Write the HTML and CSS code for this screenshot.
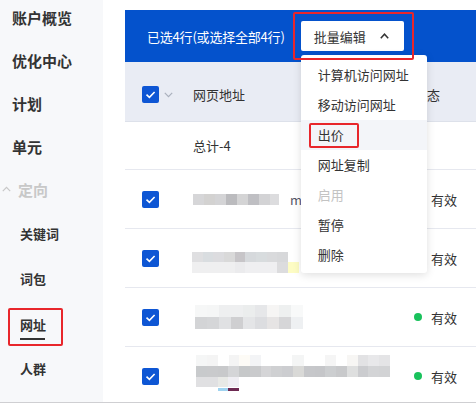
FILE: index.html
```html
<!DOCTYPE html>
<html lang="zh-CN">
<head>
<meta charset="utf-8">
<title>网址</title>
<link rel="stylesheet" href="styles.css">
</head>
<body>
<div class="page">
  <aside class="sidebar">
    <ul class="nav">
      <li class="nav-item">账户概览</li>
      <li class="nav-item">优化中心</li>
      <li class="nav-item">计划</li>
      <li class="nav-item">单元</li>
      <li class="nav-item nav-group"><svg class="group-caret" width="9" height="6" viewBox="0 0 9 6"><polyline points="0.8,5.2 4.5,1.3 8.2,5.2" fill="none" stroke="#c8c8c8" stroke-width="1.2"/></svg>定向</li>
      <li class="nav-sub">关键词</li>
      <li class="nav-sub">词包</li>
      <li class="nav-sub nav-active"><span class="nav-label">网址</span><span class="mark nav-mark"></span></li>
      <li class="nav-sub">人群</li>
    </ul>
  </aside>
  <main class="main">
    <div class="toolbar">
      <span class="sel-text">已选4行(或选择全部4行)</span>
      <div class="batch">
        <button class="batch-btn"><span>批量编辑</span><svg width="9" height="6" viewBox="0 0 9 6"><polyline points="0.8,5.2 4.5,1.2 8.2,5.2" fill="none" stroke="#333" stroke-width="1.5"/></svg></button>
        <span class="mark batch-mark"></span>
        <ul class="menu">
          <li>计算机访问网址</li>
          <li>移动访问网址</li>
          <li class="menu-hover">出价<span class="mark price-mark"></span></li>
          <li>网址复制</li>
          <li class="menu-disabled">启用</li>
          <li>暂停</li>
          <li>删除</li>
        </ul>
      </div>
    </div>
    <div class="table">
      <div class="row row-head">
        <div class="cell-check"><span class="cb"><svg width="17" height="17" viewBox="0 0 17 17"><polyline points="4.5,8.7 7.4,11.4 12.6,6" fill="none" stroke="#fff" stroke-width="1.6"/></svg></span><svg class="head-caret" width="9" height="6" viewBox="0 0 9 6"><polyline points="0.8,0.8 4.5,4.7 8.2,0.8" fill="none" stroke="#aab0bd" stroke-width="1.2"/></svg></div>
        <div>网页地址</div>
        <div>状态</div>
      </div>
      <div class="row row-total">
        <div></div>
        <div>总计-4</div>
        <div></div>
      </div>
      <div class="row row-data">
        <div class="cell-check"><span class="cb"><svg width="17" height="17" viewBox="0 0 17 17"><polyline points="4.5,8.7 7.4,11.4 12.6,6" fill="none" stroke="#fff" stroke-width="1.6"/></svg></span></div>
        <div class="url"><span class="mz mz1"></span><span class="frag">m</span></div>
        <div class="status"><span class="dot"></span>有效</div>
      </div>
      <div class="row row-data">
        <div class="cell-check"><span class="cb"><svg width="17" height="17" viewBox="0 0 17 17"><polyline points="4.5,8.7 7.4,11.4 12.6,6" fill="none" stroke="#fff" stroke-width="1.6"/></svg></span></div>
        <div class="url"><span class="mz mz2"></span></div>
        <div class="status"><span class="dot"></span>有效</div>
      </div>
      <div class="row row-data">
        <div class="cell-check"><span class="cb"><svg width="17" height="17" viewBox="0 0 17 17"><polyline points="4.5,8.7 7.4,11.4 12.6,6" fill="none" stroke="#fff" stroke-width="1.6"/></svg></span></div>
        <div class="url"><span class="mz mz3"></span></div>
        <div class="status"><span class="dot"></span>有效</div>
      </div>
      <div class="row row-data">
        <div class="cell-check"><span class="cb"><svg width="17" height="17" viewBox="0 0 17 17"><polyline points="4.5,8.7 7.4,11.4 12.6,6" fill="none" stroke="#fff" stroke-width="1.6"/></svg></span></div>
        <div class="url"><span class="mz mz4"></span></div>
        <div class="status"><span class="dot"></span>有效</div>
      </div>
    </div>
  </main>
</div>
</body>
</html>
```
FILE: styles.css
```css
* { box-sizing: border-box; }
html, body { margin: 0; padding: 0; }
body {
  width: 476px;
  height: 404px;
  overflow: hidden;
  background: #fff;
  font-family: "Noto Sans CJK SC", "Noto Sans", sans-serif;
  color: #333;
}
.page {
  display: flex;
  height: 403px;
  overflow: hidden;
  border-bottom: 1px solid #cfcfd2;
}
.sidebar {
  width: 103px;
  flex: none;
  background: #f7f8fa;
}
.nav {
  list-style: none;
  margin: -4px 0 0;
  padding: 0;
}
.nav-item {
  height: 43px;
  line-height: 43px;
  padding-left: 12px;
  font-size: 15px;
  font-weight: 700;
  white-space: nowrap;
}
.nav-group {
  padding-left: 2px;
  color: #c8c8c8;
  display: flex;
  align-items: center;
}
.group-caret { margin-right: 7px; margin-top: -2px; }
.nav-sub {
  position: relative;
  height: 45px;
  line-height: 45px;
  padding-left: 20px;
  font-size: 13px;
  font-weight: 700;
}
.nav-label {
  position: relative;
  display: inline-block;
  line-height: 20px;
  vertical-align: middle;
}
.nav-label::after {
  content: "";
  position: absolute;
  left: 0;
  top: 23px;
  width: 25px;
  height: 2px;
  background: #333;
}
.mark {
  position: absolute;
  border: 2px solid #e8262b;
  border-radius: 2px;
  z-index: 20;
  pointer-events: none;
}
.nav-mark { left: 8px; top: 7px; width: 55px; height: 38px; }

.main {
  flex: 1;
  margin-left: 22px;
  padding-top: 10px;
  min-width: 0;
}
.toolbar {
  height: 52px;
  background: #0452cc;
  display: flex;
  align-items: center;
  padding-left: 22px;
  color: #fff;
  font-size: 13px;
  position: relative;
  z-index: 5;
}
.sel-text { white-space: nowrap; letter-spacing: -0.2px; }
.batch {
  position: relative;
  margin-left: 16px;
}
.batch-btn {
  width: 103px;
  height: 30px;
  background: #fff;
  border: none;
  border-radius: 2px;
  padding: 0 15px 0 13px;
  display: flex;
  align-items: center;
  justify-content: space-between;
  font-family: inherit;
  font-size: 13px;
  color: #333;
}
.batch-mark { left: -8px; top: -9px; width: 121px; height: 48px; }
.menu {
  position: absolute;
  left: 0;
  top: 34px;
  width: 126px;
  margin: 0;
  padding: 5px 0 3px;
  list-style: none;
  background: #fff;
  border-radius: 3px;
  box-shadow: 0 2px 8px rgba(0, 0, 0, 0.13);
  z-index: 10;
}
.menu li {
  position: relative;
  height: 30px;
  line-height: 30px;
  padding-left: 17px;
  font-size: 13px;
  color: #333;
  white-space: nowrap;
}
.menu .menu-hover { background: #f3f5f9; }
.menu .menu-disabled { color: #c3c3c3; }
.price-mark { left: 8px; top: 3px; width: 50px; height: 25px; }

.table { font-size: 13px; }
.row {
  display: grid;
  grid-template-columns: 68px 221px 1fr;
  align-items: center;
  border-bottom: 1px solid #e6e8ef;
}
.row-head {
  height: 60px;
  padding-top: 6px;
  background: #e9ecf4;
  border-bottom-color: #dde1ea;
}
.row-total { height: 48px; }
.row-data { height: 59px; }
.cell-check {
  display: flex;
  align-items: center;
  padding-left: 17px;
}
.cb {
  width: 17px;
  height: 17px;
  border-radius: 2px;
  background: #0e56d4;
  display: block;
}
.cb svg { display: block; }
.head-caret { margin-left: 5px; }
.url {
  display: flex;
  align-items: center;
  white-space: nowrap;
}
.frag { margin-left: 11px; color: #556; }
.status {
  display: flex;
  align-items: center;
  color: #333;
}
.dot {
  width: 8px;
  height: 8px;
  border-radius: 50%;
  background: #19c25c;
  margin-right: 9px;
}
.mz { display: block; background-repeat: no-repeat; }
.mz1 {
  width: 86px;
  height: 11px;
  background-image: linear-gradient(90deg, #d6d6d8 0 11px, #d3d2d1 11px 22px, #d4d4d6 22px 33px, #bbbbbe 33px 44px, #d4d4d5 44px 55px, #bfbfc3 55px 66px, #d3d3d5 66px 77px, #dcdcde 77px 86px);
}
.mz2 {
  width: 107px;
  height: 21px;
  margin-left: -1px;
  margin-top: 8px;
  background-image:
    linear-gradient(90deg, #dfdfe1 0 11px, #d9dde0 11px 21px, #dcdcdf 21px 32px, #d9d9d9 32px 43px, #c7c5c8 43px 53px, #d6d9dc 53px 64px, #d8dcde 64px 75px, #d9dadc 75px 85px, #d7d8da 85px 96px),
    linear-gradient(90deg, #efeff0 0 43px, #ebebed 43px 53px, #efeff1 53px 85px, #dcdcde 85px 96px, #fdfcc4 96px 107px);
  background-size: 96px 10px, 107px 11px;
  background-position: 0 0, 0 10px;
}
.mz3 {
  width: 108px;
  height: 24px;
  margin-left: 2px;
  background-image:
    linear-gradient(90deg, #f6f7f7 0 12px, #f5f6f6 12px 24px, #eeeff0 24px 48px, #ebeded 48px 60px, #e6e7e9 60px 72px, #f6f5f4 72px 84px, #eef0f0 84px 96px, #f8f9f9 96px 108px),
    linear-gradient(90deg, #d3d4d6 0 12px, #d5d6d8 12px 24px, #e0e1e3 24px 36px, #cfcfd1 36px 48px, #e4e5e7 48px 60px, #dcdde0 60px 72px, #e6e4e4 72px 84px, #d6d6d8 84px 96px, #eef0f2 96px 108px);
  background-size: 108px 12px, 108px 12px;
  background-position: 0 0, 0 12px;
}
.mz4 {
  width: 194px;
  height: 36px;
  margin-left: 3px;
  margin-bottom: 7px;
  background-image:
    linear-gradient(90deg, #f5f6f6 0 11px, #f4f4f4 11px 22px, #fff 22px 33px, #f4f4f4 33px 43px, #fdfbf6 43px 54px, #f3f4f6 54px 65px, #fff 65px 96px, #f4f5f5 96px 108px, #fff 108px 129px, #f5f5f5 129px 140px, #fff 140px 151px, #f7f6f4 151px 162px, #e2e2e4 162px 172px, #e8e8ea 172px 183px, #e4e4e6 183px 194px),
    linear-gradient(90deg, #c8cacc 0 11px, #c9cacc 11px 22px, #c8c9cb 22px 32px, #d4d5d7 32px 43px, #c6c8c9 43px 54px, #c9cacc 54px 65px, #d5d5d7 65px 75px, #cfd0d2 75px 86px, #cccdd0 86px 97px, #d9d9d7 97px 108px, #c6c7ca 108px 119px, #c5c6c9 119px 129px, #ccced0 129px 140px, #c8c9cb 140px 151px, #dedfdf 151px 162px, #cbcccf 162px 172px, #d3d4d6 172px 183px, #d2d3d5 183px 194px),
    linear-gradient(90deg, #e0e0e2 0 22px, #e8e9e6 22px 32px, #efeef3 32px 43px),
    linear-gradient(90deg, #9fd3f0 0 10px, #6d2a52 10px 21px);
  background-size: 194px 11px, 194px 11px, 43px 10px, 21px 3px;
  background-position: 0 0, 0 11px, 0 22px, 22px 33px;
}
```
